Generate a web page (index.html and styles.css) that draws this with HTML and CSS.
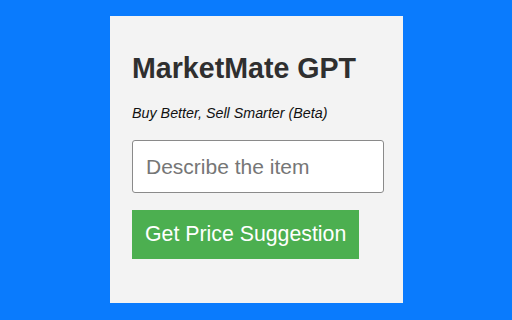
FILE: index.html
```html
<!DOCTYPE html>
<html>
<head>
<meta charset="utf-8">
<link rel="stylesheet" href="styles.css">
</head>
<body>
<div class="stage">
  <div class="panel">
    <h1 class="title">MarketMate GPT</h1>
    <p class="tagline">Buy Better, Sell Smarter (Beta)</p>
    <input class="item-input" type="text" placeholder="Describe the item">
    <button class="suggest-btn">Get Price Suggestion</button>
  </div>
</div>
</body>
</html>
```
FILE: styles.css
```css
html, body {
  margin: 0;
  padding: 0;
}
body {
  width: 512px;
  height: 320px;
  background: #0a7bfd;
  font-family: "Liberation Sans", Arial, sans-serif;
  overflow: hidden;
}
.stage {
  width: 512px;
  height: 320px;
  display: flex;
  align-items: center;
  justify-content: center;
}
.panel {
  box-sizing: border-box;
  width: 293px;
  height: 287px;
  background: #f3f3f3;
  padding: 36px 22px 0 22px;
  display: flex;
  flex-direction: column;
  align-items: flex-start;
  margin-left: 1px;
  margin-top: -1px;
}
.title {
  margin: 0;
  font-size: 28.6px;
  font-weight: bold;
  color: #2f2f2f;
  line-height: 33px;
}
.tagline {
  margin: 20px 0 0 0;
  font-size: 14.3px;
  font-style: italic;
  color: #111;
  line-height: 16px;
}
.item-input {
  box-sizing: border-box;
  margin-top: 19px;
  width: 252px;
  height: 53px;
  border: 1px solid #8a8a8a;
  border-radius: 3px;
  background: #fff;
  padding: 0 13px;
  font-family: "Liberation Sans", Arial, sans-serif;
  font-size: 21px;
  color: #222;
  outline: none;
}
.item-input::placeholder {
  color: #767676;
}
.suggest-btn {
  box-sizing: border-box;
  margin-top: 17px;
  height: 49px;
  padding: 0 13px;
  border: none;
  border-radius: 0;
  background: #4caf50;
  color: #fff;
  font-family: "Liberation Sans", Arial, sans-serif;
  font-size: 21.3px;
  cursor: pointer;
}
```
